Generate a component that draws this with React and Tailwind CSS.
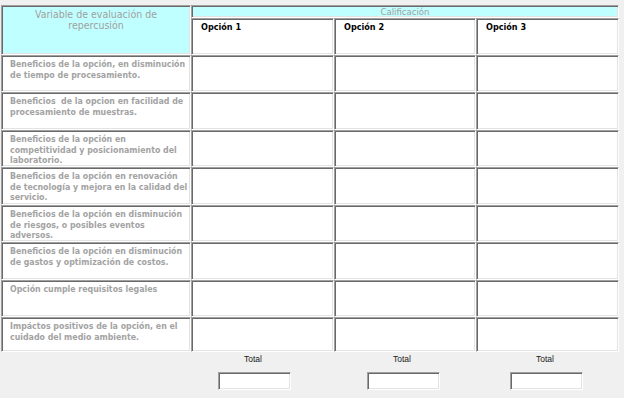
const sunken =
  "border-t border-l border-t-[#a0a0a0] border-l-[#a0a0a0] border-b border-r border-b-white border-r-white shadow-[inset_1px_1px_0_#696969,inset_-1px_-1px_0_#e3e3e3]";

const rows = [
  "Beneficios de la opción, en disminución de tiempo de procesamiento.",
  "Beneficios  de la opcion en facilidad de procesamiento de muestras.",
  "Beneficios de la opción en competitividad y posicionamiento del laboratorio.",
  "Beneficios de la opción en renovación de tecnología y mejora en la calidad del servicio.",
  "Beneficios de la opción en disminución de riesgos, o posibles eventos adversos.",
  "Beneficios de la opción en disminución de gastos y optimización de costos.",
  "Opción cumple requisitos legales",
  "Impáctos positivos de la opción, en el cuidado del medio ambiente.",
];

const font = { fontFamily: '"DejaVu Sans Condensed", "DejaVu Sans", Tahoma, sans-serif' };

export default function App() {
  return (
    <div className="w-[624px] h-[398px] bg-[#f0f0f0] overflow-hidden pt-[5px] pl-[1px]" style={font}>
      <div className="grid grid-cols-[190px_143px_142px_143px] grid-rows-[13px_37px_37px_38px_37px_38px_37px_38px_37px_35px]">
        <div className={`${sunken} row-span-2 bg-[#c0ffff] text-center text-[#a0a0a0] text-[10.5px] leading-[11px] pt-[3px] px-5`}>
          Variable de evaluación de repercusión
        </div>
        <div className={`${sunken} col-span-3 bg-[#c0ffff] text-center text-[#a0a0a0] text-[9.5px] leading-[11px]`}>
          Calificación
        </div>
        {["Opción 1", "Opción 2", "Opción 3"].map((o) => (
          <div key={o} className={`${sunken} bg-white font-bold text-black text-[9px] leading-[10px] pt-[3px] pl-[9px]`}>
            {o}
          </div>
        ))}
        {rows.map((r) => (
          <>
            <div key={r} className={`${sunken} bg-white text-[#a3a3a3] font-bold text-[8.75px] leading-[10.5px] pt-[3px] pl-[8px] pr-[2px] whitespace-pre-wrap`}>
              {r}
            </div>
            <div className={`${sunken} bg-white`} />
            <div className={`${sunken} bg-white`} />
            <div className={`${sunken} bg-white`} />
          </>
        ))}
      </div>
      <div className="flex pt-[1px]" style={{ fontFamily: '"Liberation Sans", Arial, sans-serif' }}>
        {[217, 76, 70].map((m, i) => (
          <div key={i} className="flex flex-col items-center w-[73px]" style={{ marginLeft: m }}>
            <div className="text-[8.5px] leading-[12px] text-[#202020] mb-[7px] mr-[3px]">Total</div>
            <div className={`${sunken} bg-white w-[73px] h-[18px]`} />
          </div>
        ))}
      </div>
    </div>
  );
}
